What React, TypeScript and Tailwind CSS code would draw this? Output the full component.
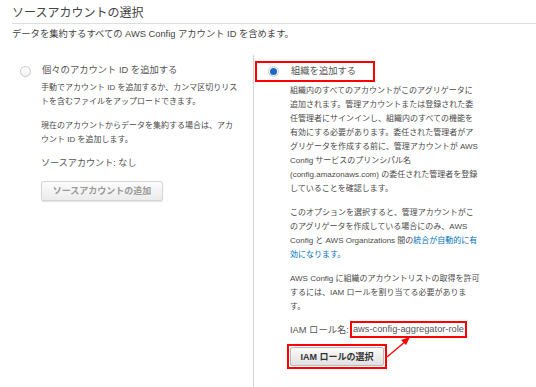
const font = "font-['Liberation_Sans','Noto_Sans_CJK_JP',sans-serif]";

function Radio({ checked }: { checked?: boolean }) {
  return (
    <span className="flex h-[11px] w-[11px] shrink-0 items-center justify-center rounded-full border border-[#c9c9c9] bg-gradient-to-b from-white to-[#f1f1f1]">
      {checked && <span className="h-[7px] w-[7px] rounded-full bg-[#1b69c4]" />}
    </span>
  );
}

export default function App() {
  return (
    <div className={`relative h-[387px] w-[536px] overflow-hidden bg-white text-[#4a4a4a] ${font}`}>

      {/* Header */}
      <div className="ml-[12px] border-b border-[#dedede] pt-[5px] pb-[1px]">
        <h1 className="text-[12px] leading-[17px] text-[#444]">
          ソースアカウントの選択
        </h1>
      </div>
      <p className="mt-[3px] pl-[12px] text-[9.3px] leading-[14px] text-[#444]">
        データを集約するすべての AWS Config アカウント ID を含めます。
      </p>

      {/* Options */}
      <div className="mt-[14px] flex h-[332px]">

        {/* Left option */}
        <div className="w-[253px] pl-[20px] pt-[8px]">
          <div className="flex h-[16px] items-center gap-[11px]">
            <Radio />
            <span className="text-[9.3px] text-[#555]">個々のアカウント ID を追加する</span>
          </div>

          <div className="mt-[2px] pl-[21px] text-[8px] leading-[14px] whitespace-nowrap">
            <p className="mb-[10px]">
              手動でアカウント ID を追加するか、カンマ区切りリス<br />
              トを含むファイルをアップロードできます。
            </p>
            <p>
              現在のアカウントからデータを集約する場合は、アカ<br />
              ウント ID を追加します。
            </p>

            <p className="mt-[8px] text-[9.1px] leading-[16px] text-[#555]">
              ソースアカウント: なし
            </p>

            <button
              disabled
              className="mt-[10px] h-[20px] w-[122px] rounded-[2px] border border-[#d6d6d6] bg-gradient-to-b from-[#fbfbfb] to-[#ececec] text-[9px] font-bold text-[#9a9a9a] shadow-[0_1px_1px_rgba(0,0,0,0.12)]"
            >
              ソースアカウントの追加
            </button>
          </div>
        </div>

        {/* Divider */}
        <div className="w-px bg-[#d4d4d4]" />

        {/* Right option */}
        <div className="flex-1 pl-[1px] pt-[3px]">
          <div className="inline-flex h-[21px] items-center gap-[12px] border-2 border-[#f00] pl-[11px] pr-[17px] pt-[1px]">
            <Radio checked />
            <span className="text-[9.3px] text-[#555]">組織を追加する</span>
          </div>

          <div className="mt-[2px] pl-[35px] text-[8px] leading-[14px] whitespace-nowrap">
            <p className="mb-[10px]">
              組織内のすべてのアカウントがこのアグリゲータに<br />
              追加されます。管理アカウントまたは登録された委<br />
              任管理者にサインインし、組織内のすべての機能を<br />
              有効にする必要があります。委任された管理者がア<br />
              グリゲータを作成する前に、管理アカウントが AWS<br />
              Config サービスのプリンシパル名<br />
              (config.amazonaws.com) の委任された管理者を登録<br />
              していることを確認します。
            </p>
            <p className="mb-[10px]">
              このオプションを選択すると、管理アカウントがこ<br />
              のアグリゲータを作成している場合にのみ、AWS<br />
              Config と AWS Organizations 間の<a href="#" className="text-[#0073bb]">統合が自動的に有<br />
              効になります。</a>
            </p>
            <p>
              AWS Config に組織のアカウントリストの取得を許可<br />
              するには、IAM ロールを割り当てる必要がありま<br />
              す。
            </p>

            <div className="mt-[7px] flex h-[17px] items-center text-[9.3px] text-[#555]">
              <span>IAM ロール名:</span>
              <span className="ml-[1px] border-2 border-[#f00] px-[1px] leading-[13px]">
                aws-config-aggregator-role
              </span>
            </div>

            <div className="ml-[-3px] mt-[6px] inline-block border-2 border-[#f00] p-[1px]">
              <button className="block h-[19px] w-[94px] rounded-[2px] border border-[#b9b9b9] bg-gradient-to-b from-[#fafafa] to-[#e1e1e1] text-[9px] font-bold text-[#333]">
                IAM ロールの選択
              </button>
            </div>
          </div>
        </div>
      </div>

      {/* Annotation arrow */}
      <svg className="pointer-events-none absolute left-[384px] top-[333px]" width="30" height="28" viewBox="0 0 30 28">
        <line x1="3" y1="24" x2="22" y2="8" stroke="#f00" strokeWidth="1.2" />
        <polygon points="26,4 17,7 22,12" fill="#f00" />
      </svg>
    </div>
  );
}
